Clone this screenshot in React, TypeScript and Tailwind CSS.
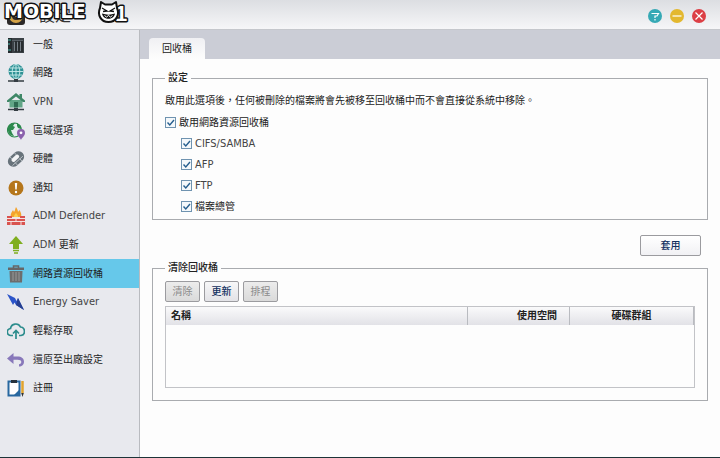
import React, { useState } from "react";

type NavItem = {
  id: string;
  label: string;
  latin?: string;
  icon: React.ReactNode;
};

const navItems: NavItem[] = [
  {
    id: "general",
    label: "一般",
    icon: (
      <>
        <rect x="1" y="2" width="16" height="15" fill="#3a4045" />
        <rect x="1" y="2" width="4" height="15" fill="#25292d" />
        <path d="M1 4h3M1 8h2M1 14h3" stroke="#4bb3a6" />
        <path d="M5 4.5h11" stroke="#596067" />
        <path d="M7.5 6v9M10.5 6v9M13.5 6v9" stroke="#767e86" />
        <path d="M9 5v11M12 5v11M15 5v11" stroke="#171a1d" />
      </>
    ),
  },
  {
    id: "network",
    label: "網路",
    icon: (
      <>
        <circle cx="9" cy="7.5" r="7.5" fill="#2f9296" />
        <path d="M1.5 7.5h15M3 4h12M3 11h12M9 0v15" stroke="#c9ecec" strokeWidth=".9" />
        <ellipse cx="9" cy="7.5" rx="3.8" ry="7.3" fill="none" stroke="#c9ecec" strokeWidth=".9" />
        <path d="M1 17h16" stroke="#343c42" strokeWidth="1.5" />
        <rect x="7" y="15" width="4" height="3" fill="#343c42" />
      </>
    ),
  },
  {
    id: "vpn",
    label: "",
    latin: "VPN",
    icon: (
      <>
        <path d="M2.5 7h13v7.500h-13z" fill="#62a687" />
        <path d="M9 0 0 7.500V9h2l7-5.500L16 9h2V7.500l-3-2.500V1h-2.500v2z" fill="#3f8767" />
        <rect x="7" y="9" width="4" height="5.5" fill="#2f6b52" />
        <path d="M1 16.5h16" stroke="#343c42" strokeWidth="1.5" />
        <rect x="7" y="15" width="4" height="3" fill="#343c42" />
      </>
    ),
  },
  {
    id: "region",
    label: "區域選項",
    icon: (
      <>
        <circle cx="7.5" cy="8" r="7" fill="#e6eef0" stroke="#2d8a4e" strokeWidth="1.2" />
        <path d="M1 5C2 2 5 .5 8 1L6 4l2 1-2 3H4l1 3 2 3C3 14 0 10 1 5zM10 1l4 3v3l-3-1-1-2z" fill="#2d8a4e" />
        <path d="M14 18c-1-2.500-4-4-4-7a4 4 0 0 1 8 0c0 3-3 4.500-4 7z" fill="#8b62ad" />
        <circle cx="14" cy="10.8" r="1.4" fill="#fff" />
      </>
    ),
  },
  {
    id: "hardware",
    label: "硬體",
    icon: (
      <g transform="rotate(-42 9 9)">
        <rect x="0" y="3.5" width="18" height="11" rx="5.5" fill="#68737b" />
        <rect x="4.5" y="6" width="9" height="4" rx="2" fill="#f3f4f6" />
        <path d="M2 11.5h14M6 3.5V6M12 3.5V6M6 11v3.500M12 11v3.500" stroke="#c6ccd1" strokeWidth=".8" />
      </g>
    ),
  },
  {
    id: "notice",
    label: "通知",
    icon: (
      <>
        <circle cx="9" cy="9" r="7.5" fill="#b5761b" />
        <path d="M7.8 4h2.400l-.5 6.500H8.300z" fill="#fff" />
        <circle cx="9" cy="13" r="1.2" fill="#fff" />
      </>
    ),
  },
  {
    id: "defender",
    label: "",
    latin: "ADM Defender",
    icon: (
      <>
        <path d="M4 10C3 7 5 5 6 3l1 2c1-1 1-3 2-5 1 2 2 3 2 5l1.500-2c1 2 2.500 4 1.500 7z" fill="#f4a32c" />
        <path d="M7 10c0-2 1-3 2-4 1 1 2 2 2 4z" fill="#fbd04d" />
        <path d="M0 9h5v2h8V9h5v9H0z" fill="#d9534f" />
        <path d="M0 11.5h18M0 14.5h18M9 11.5v3M4 14.5v3.500M14 14.5v3.500" stroke="#f5e2e1" />
      </>
    ),
  },
  {
    id: "update",
    label: "更新",
    latin: "ADM",
    icon: (
      <>
        <path d="M9 0 2 8h4v5h6V8h4z" fill="#7fae1f" />
        <path d="M6 14.5h6M7 17h4" stroke="#7fae1f" strokeWidth="1.5" />
      </>
    ),
  },
  {
    id: "recycle",
    label: "網路資源回收桶",
    icon: (
      <>
        <path d="M6.5 3V1h5v2" fill="none" stroke="#666" strokeWidth="1.5" />
        <rect x="1" y="2.5" width="16" height="2.5" fill="#666" />
        <path d="M2.5 6h13L15 17.500H3z" fill="#6d6d6d" />
        <path d="M6 7v9M9 7v9M12 7v9" stroke="#999" />
      </>
    ),
  },
  {
    id: "energy",
    label: "",
    latin: "Energy Saver",
    icon: (
      <>
        <path d="M0 1 8 5l1.500 3L11 5l6 12-8-5-1.500-2.500L6 12z" fill="#2c55c9" />
        <path d="m11 5 6 12-8-5z" fill="#263f8f" />
      </>
    ),
  },
  {
    id: "ezconnect",
    label: "輕鬆存取",
    icon: (
      <>
        <path d="M6 13.500H4A3.500 3.500 0 0 1 3.500 6.500 5.300 5.300 0 0 1 13.500 5a4.300 4.300 0 0 1 .5 8.500h-2" fill="none" stroke="#2b8c8c" strokeWidth="1.7" />
        <path d="M9 17V9M6 11.500l3-3 3 3" fill="none" stroke="#2b8c8c" strokeWidth="1.7" />
      </>
    ),
  },
  {
    id: "factory",
    label: "還原至出廠設定",
    icon: (
      <path d="M0 7.500 6.500 2v3.500h4c4 0 6.500 2 6.500 5 0 3.500-2 5-5 5v-2.300c1.500 0 2.300-1 2.300-2.200 0-1.500-1.300-2.200-3.800-2.200h-4V13z" fill="#8878ba" />
    ),
  },
  {
    id: "register",
    label: "註冊",
    icon: (
      <>
        <path d="M1.5 2.500h11v14h-11z" fill="#fff" stroke="#2868a0" strokeWidth="2" />
        <rect x="4" y="1" width="6" height="3" fill="#26323c" />
        <path d="m7 16 5-5v5z" fill="#2868a0" />
        <path d="M15.5 2v12" stroke="#e2a32d" strokeWidth="2.5" />
        <path d="m14.2 14 1.300 4 1.300-4z" fill="#333" />
      </>
    ),
  },
];

const shareOptions = [
  { id: "cifs", label: "CIFS/SAMBA", latin: true },
  { id: "afp", label: "AFP", latin: true },
  { id: "ftp", label: "FTP", latin: true },
  { id: "explorer", label: "檔案總管", latin: false },
];

const latinText = "font-['DejaVu_Sans_Condensed','DejaVu_Sans',sans-serif] text-[11px] text-[#444]";

function WindowHeader() {
  return (
    <header className="relative flex h-[30px] items-center justify-between border-b border-[#c5c7cc] bg-linear-to-b from-[#dcdee2] to-[#f6f6f8] pt-[3px] pr-[14px] pl-[7px]">
      <div className="flex items-center gap-[14px]">
        <svg className="size-[18px]" viewBox="0 0 18 18" aria-hidden="true">
          <rect width="18" height="18" rx="3" fill="#2d2a29" />
          <circle cx="9" cy="9" r="5.5" fill="none" stroke="#d5a347" strokeWidth="3" />
          <path d="M9 4v6" stroke="#f7e2a9" strokeWidth="2" />
        </svg>
        <h1 className="text-[16px] leading-5 text-[#333]">設定</h1>
      </div>
      <div className="flex gap-2">
        <button type="button" aria-label="說明" className="size-[14px] rounded-full">
          <svg viewBox="0 0 14 14" aria-hidden="true">
            <circle cx="7" cy="7" r="7" fill="#36a9b5" />
            <path d="M3.5 4.500h7L9 7H7v2M7 10v1.500" fill="none" stroke="#fff" strokeWidth="1.2" />
          </svg>
        </button>
        <button type="button" aria-label="最小化" className="size-[14px] rounded-full">
          <svg viewBox="0 0 14 14" aria-hidden="true">
            <circle cx="7" cy="7" r="7" fill="#e3b82f" />
            <path d="M2.5 7h9" stroke="#fff" strokeWidth="1.2" />
          </svg>
        </button>
        <button type="button" aria-label="關閉" className="size-[14px] rounded-full">
          <svg viewBox="0 0 14 14" aria-hidden="true">
            <circle cx="7" cy="7" r="7" fill="#dc3f45" />
            <path d="m3.5 3.500 7 7M10.5 3.500l-7 7" stroke="#fff" strokeWidth="1.2" />
          </svg>
        </button>
      </div>
      <Watermark />
    </header>
  );
}

// Site mark laid over the window's top left corner
function Watermark() {
  return (
    <svg className="pointer-events-none absolute top-0 left-0 h-[28px] w-[136px]" viewBox="0 0 136 28" aria-hidden="true">
      <text x="4" y="18" fontFamily="DejaVu Sans" fontWeight="700" fontSize="19" fill="#fff" stroke="#111" strokeWidth="3" strokeLinejoin="round" paintOrder="stroke">
        MOBILE
      </text>
      <text x="115" y="21" fontFamily="Liberation Sans" fontWeight="700" fontSize="22" fill="#fff" stroke="#111" strokeWidth="3" strokeLinejoin="round" paintOrder="stroke">
        1
      </text>
      <path d="m101 2 4 2.500h7L116 2l1 6c3 7-1 14-8.500 14S97 15 100 8z" fill="#fff" stroke="#111" strokeWidth="2" strokeLinejoin="round" />
      <path d="m102 8 5 3-4 .5M115 8l-5 3 4 .5" fill="none" stroke="#111" strokeWidth="1.3" />
      <path d="M102 13.5c4 1.500 9 1.500 13 0-1 7-12 7-13 0z" fill="#111" />
      <path d="m104.500 15.500 2 1.500 2-1.500 2 1.500 2-1.500" fill="none" stroke="#fff" />
    </svg>
  );
}

function Sidebar() {
  const [active, setActive] = useState("recycle");

  return (
    <nav className="w-[140px] shrink-0 border-r border-[#b9bbc0] bg-[#e8e9ee]">
      <ul className="grid h-[372px] auto-rows-fr">
        {navItems.map((item) => (
          <li key={item.id} className="flex">
            <button
              type="button"
              onClick={() => setActive(item.id)}
              className={`flex w-full items-center gap-2 pt-px pl-[7px] text-left whitespace-nowrap ${
                active === item.id ? "bg-[#66c8ea]" : ""
              }`}
            >
              <svg className="size-[18px] shrink-0" viewBox="0 0 18 18" aria-hidden="true">
                {item.icon}
              </svg>
              <span>
                {item.latin && <span className={latinText}>{item.latin}</span>}
                {item.latin && item.label ? " " : ""}
                {item.label}
              </span>
            </button>
          </li>
        ))}
      </ul>
    </nav>
  );
}

function CheckOption({ id, label, latin }: { id: string; label: string; latin?: boolean }) {
  const [checked, setChecked] = useState(true);

  return (
    <div className="flex h-[21px] items-center gap-[3px]">
      <span className="relative flex size-[11px]">
        <input
          id={id}
          type="checkbox"
          checked={checked}
          onChange={(e) => setChecked(e.target.checked)}
          className="peer size-[11px] appearance-none border border-[#6f93b0] bg-[#f4f8fb]"
        />
        <svg className="pointer-events-none absolute inset-0 hidden size-[11px] peer-checked:block" viewBox="0 0 11 11" aria-hidden="true">
          <path d="m2.5 5.500 2.300 2.500L9 3" fill="none" stroke="#255e8e" strokeWidth="1.4" />
        </svg>
      </span>
      <label htmlFor={id} className={latin ? latinText : ""}>{label}</label>
    </div>
  );
}

function ToolButton({ children, disabled }: { children: React.ReactNode; disabled?: boolean }) {
  return (
    <button
      type="button"
      disabled={disabled}
      className="h-[21px] w-[35px] rounded-xs border border-[#9b9b9f] bg-linear-to-b from-[#f7f7f8] to-[#e3e3e7] font-medium text-[#12305f] disabled:from-[#ececec] disabled:to-[#dadada] disabled:font-normal disabled:text-[#8b8b8b]"
    >
      {children}
    </button>
  );
}

export default function App() {
  return (
    <div className="flex min-h-screen flex-col border-b border-[#1d3438] bg-[#fdfdfd] font-['Liberation_Sans','Noto_Sans_CJK_TC',sans-serif] text-[10px] leading-4 text-[#222]">
      <WindowHeader />
      <div className="flex flex-1">
        <Sidebar />
        <main className="min-w-0 flex-1">
          <div role="tablist" className="flex h-[29px] items-end bg-[#cbcdd6] pl-[9px]">
            <button
              type="button"
              role="tab"
              aria-selected="true"
              className="h-[21px] rounded-t-sm bg-linear-to-b from-[#f0f0f3] to-[#fdfdfd] px-[13px]"
            >
              回收桶
            </button>
          </div>

          <div className="px-3 pt-[11px]">
            <fieldset className="border border-[#a9abaf] px-3 pb-[2px]">
              <legend className="px-[3px] font-medium">設定</legend>
              <p className="pt-[7px] pb-[3px]">啟用此選項後，任何被刪除的檔案將會先被移至回收桶中而不會直接從系統中移除。</p>
              <CheckOption id="enable" label="啟用網路資源回收桶" />
              <div className="pl-4">
                {shareOptions.map((option) => (
                  <CheckOption key={option.id} {...option} />
                ))}
              </div>
            </fieldset>

            <div className="flex justify-end pt-[15px] pr-[7px]">
              <button
                type="button"
                className="h-[21px] w-[61px] rounded-xs border border-[#9b9b9f] bg-linear-to-b from-white to-[#f1f1f4] font-medium text-[#12305f]"
              >
                套用
              </button>
            </div>

            <fieldset className="mt-1 border border-[#a9abaf] px-3 pb-3">
              <legend className="px-[3px] font-medium">清除回收桶</legend>
              <div className="flex gap-1 pt-[5px]">
                <ToolButton disabled>清除</ToolButton>
                <ToolButton>更新</ToolButton>
                <ToolButton disabled>排程</ToolButton>
              </div>
              <div className="mt-1 h-[82px] border border-[#c2c3c7]">
                <table className="w-full table-fixed border-collapse">
                  <thead>
                    <tr className="h-[18px] bg-linear-to-b from-[#fafafb] to-[#e2e2e7]">
                      <th className="border-r border-[#b9bbc0] pl-[5px] text-left font-bold">名稱</th>
                      <th className="w-[102px] border-r border-[#b9bbc0] pr-3 text-right font-bold">使用空間</th>
                      <th className="w-[124px] border-r border-[#b9bbc0] text-center font-bold">硬碟群組</th>
                    </tr>
                  </thead>
                </table>
              </div>
            </fieldset>
          </div>
        </main>
      </div>
    </div>
  );
}
